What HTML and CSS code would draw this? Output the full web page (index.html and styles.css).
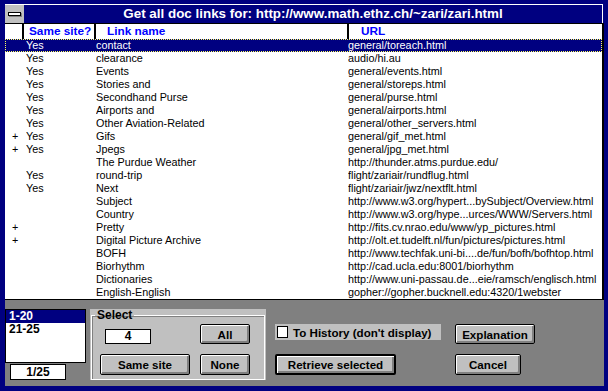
FILE: index.html
```html
<!DOCTYPE html>
<html>
<head>
  <title>Get all doc links</title>
  <link rel="stylesheet" href="styles.css">
</head>

<body>
  <div class="window">
    <div class="title-bar">
      <div class="sys-menu"><div class="sys-dash"></div></div>
      <div class="title">Get all doc links for: http://www.math.ethz.ch/~zari/zari.html</div>
    </div>

    <div class="link-list">
      <div class="list-head">
        <div class="head-cell"></div>
        <div class="head-cell head-site">Same site?</div>
        <div class="head-cell head-name">Link name</div>
        <div class="head-cell head-url">URL</div>
      </div>

      <div class="row selected"><span></span><span>Yes</span><span>contact</span><span>general/toreach.html</span></div>
      <div class="row"><span></span><span>Yes</span><span>clearance</span><span>audio/hi.au</span></div>
      <div class="row"><span></span><span>Yes</span><span>Events</span><span>general/events.html</span></div>
      <div class="row"><span></span><span>Yes</span><span>Stories and</span><span>general/storeps.html</span></div>
      <div class="row"><span></span><span>Yes</span><span>Secondhand Purse</span><span>general/purse.html</span></div>
      <div class="row"><span></span><span>Yes</span><span>Airports and</span><span>general/airports.html</span></div>
      <div class="row"><span></span><span>Yes</span><span>Other Aviation-Related</span><span>general/other_servers.html</span></div>
      <div class="row"><span>+</span><span>Yes</span><span>Gifs</span><span>general/gif_met.html</span></div>
      <div class="row"><span>+</span><span>Yes</span><span>Jpegs</span><span>general/jpg_met.html</span></div>
      <div class="row"><span></span><span></span><span>The Purdue Weather</span><span>http://thunder.atms.purdue.edu/</span></div>
      <div class="row"><span></span><span>Yes</span><span>round-trip</span><span>flight/zariair/rundflug.html</span></div>
      <div class="row"><span></span><span>Yes</span><span>Next</span><span>flight/zariair/jwz/nextflt.html</span></div>
      <div class="row"><span></span><span></span><span>Subject</span><span>http://www.w3.org/hypert...bySubject/Overview.html</span></div>
      <div class="row"><span></span><span></span><span>Country</span><span>http://www.w3.org/hype...urces/WWW/Servers.html</span></div>
      <div class="row"><span>+</span><span></span><span>Pretty</span><span>http://fits.cv.nrao.edu/www/yp_pictures.html</span></div>
      <div class="row"><span>+</span><span></span><span>Digital Picture Archive</span><span>http://olt.et.tudelft.nl/fun/pictures/pictures.html</span></div>
      <div class="row"><span></span><span></span><span>BOFH</span><span>http://www.techfak.uni-bi....de/fun/bofh/bofhtop.html</span></div>
      <div class="row"><span></span><span></span><span>Biorhythm</span><span>http://cad.ucla.edu:8001/biorhythm</span></div>
      <div class="row"><span></span><span></span><span>Dictionaries</span><span>http://www.uni-passau.de...eie/ramsch/englisch.html</span></div>
      <div class="row"><span></span><span></span><span>English-English</span><span>gopher://gopher.bucknell.edu:4320/1webster</span></div>
    </div>

    <div class="panel">
      <div class="pages">
        <div class="page-list">
          <div class="page-item current">1-20</div>
          <div class="page-item">21-25</div>
        </div>
        <div class="page-count">1/25</div>
      </div>

      <div class="group">
        <fieldset class="select-box">
          <legend>Select</legend>
          <div class="select-grid">
            <div class="count-field">4</div>
            <button class="btn btn-all">All</button>
            <button class="btn btn-same">Same site</button>
            <button class="btn btn-none">None</button>
          </div>
        </fieldset>
      </div>

      <div class="actions">
        <label class="history">
          <span class="check"></span>
          To History (don't display)
        </label>
        <button class="btn btn-default btn-retrieve">Retrieve selected</button>
      </div>

      <div class="actions actions-right">
        <button class="btn btn-explain">Explanation</button>
        <button class="btn btn-cancel">Cancel</button>
      </div>
    </div>
  </div>
</body>
</html>
```

FILE: styles.css
```css
html, body {
  margin: 0;
  padding: 0;
}

body {
  background-color: #000080;
  font-family: "Liberation Sans", Arial, sans-serif;
}

.window {
  width: 608px;
  height: 391px;
  box-sizing: border-box;
  padding: 4px 4px 5px 5px;
  background-color: #000080;
}

/* title bar */
.title-bar {
  display: flex;
  height: 19px;
  box-sizing: border-box;
  border-top: 1px solid #fff;
  border-right: 1px solid #fff;
  margin-right: 1px;
}

.sys-menu {
  width: 19px;
  height: 18px;
  background-color: #c0c0c0;
  display: flex;
  align-items: center;
  justify-content: center;
}

.sys-dash {
  width: 11px;
  height: 2px;
  border: 1px solid #000;
  background-color: #fff;
  box-shadow: 1px 1px 0 #808080;
}

.title {
  flex: 1;
  color: #fff;
  font-weight: bold;
  font-size: 13.4px;
  line-height: 18px;
  text-align: center;
  white-space: nowrap;
}

/* link list */
.link-list {
  background-color: #fff;
  border-top: 1px solid #000;
  border-right: 2px solid #000;
  border-bottom: 1px solid #000;
  height: 275px;
  overflow: hidden;
}

.list-head {
  display: grid;
  grid-template-columns: 19px 72px 253px 1fr;
  height: 15px;
}

.head-cell {
  border-right: 2px solid #000;
  color: #0000ff;
  font-weight: bold;
  font-size: 11.8px;
  line-height: 15px;
  white-space: nowrap;
}

.head-cell:last-child {
  border-right: none;
}

.head-site {
  padding-left: 5px;
}

.head-name {
  padding-left: 11px;
}

.head-url {
  padding-left: 12px;
}

.row {
  display: grid;
  grid-template-columns: 21px 70px 252px 1fr;
  height: 13px;
  font-size: 10.8px;
  line-height: 13px;
  color: #000;
  white-space: nowrap;
  box-sizing: border-box;
}

.row span {
  overflow: hidden;
}

.row span:first-child {
  padding-left: 7px;
}

.row.selected {
  background-color: #000080;
  color: #fff;
  outline: 1px dotted #ffff60;
  outline-offset: -1px;
}

/* bottom panel */
.panel {
  display: flex;
  align-items: flex-start;
  height: 86px;
  box-sizing: border-box;
  padding-top: 9px;
  background-color: #808080;
}

.pages {
  width: 81px;
}

.page-list {
  height: 54px;
  box-sizing: border-box;
  border: 1px solid #000;
  background-color: #fff;
}

.page-item {
  height: 13px;
  padding-left: 3px;
  font-weight: bold;
  font-size: 12px;
  line-height: 13px;
}

.page-item.current {
  background-color: #000080;
  color: #fff;
}

.page-count {
  width: 56px;
  height: 16px;
  box-sizing: border-box;
  margin: 1px 0 0 5px;
  border: 1px solid #000;
  background-color: #fff;
  font-weight: bold;
  font-size: 12px;
  line-height: 14px;
  text-align: center;
}

.group {
  margin-left: 4px;
  width: 176px;
  box-sizing: border-box;
  padding: 0 1px;
  background-color: #c0c0c0;
}

.select-box {
  margin: 0;
  padding: 0;
  border: 1px solid #fff;
  box-shadow: inset 1px 1px 0 #808080;
}

.select-box legend {
  margin-left: 3px;
  padding: 0 2px;
  font-weight: bold;
  font-size: 12px;
  line-height: 12px;
}

.select-grid {
  display: grid;
  grid-template-columns: 90px 50px;
  grid-template-rows: 20px 21px;
  column-gap: 10px;
  row-gap: 10px;
  padding: 3px 0 4px 8px;
}

.count-field {
  align-self: start;
  width: 46px;
  height: 15px;
  box-sizing: border-box;
  margin: 5px 0 0 5px;
  border: 1px solid #000;
  background-color: #fff;
  font-weight: bold;
  font-size: 12px;
  line-height: 13px;
  text-align: center;
}

.btn {
  display: block;
  padding: 0;
  margin: 0;
  box-sizing: border-box;
  border: 1px solid #000;
  border-radius: 2px;
  background-color: #c0c0c0;
  box-shadow: inset 1px 1px 0 #fff, inset -2px -2px 0 #808080;
  font-family: "Liberation Sans", Arial, sans-serif;
  font-weight: bold;
  font-size: 11.6px;
  color: #000;
  cursor: pointer;
}

.btn-default {
  border-width: 2px;
}

.btn-all,
.btn-none {
  width: 50px;
}

.btn-same {
  width: 90px;
}

.actions {
  display: flex;
  flex-direction: column;
  align-items: flex-start;
  margin-left: 9px;
  width: 166px;
  padding-top: 15px;
}

.history {
  display: flex;
  align-items: center;
  width: 166px;
  height: 16px;
  background-color: #c0c0c0;
  font-weight: bold;
  font-size: 11.6px;
}

.check {
  width: 11px;
  height: 12px;
  box-sizing: border-box;
  margin: 0 5px 0 2px;
  border: 1px solid #000;
  background-color: #fff;
}

.btn-retrieve {
  margin-top: 14px;
  width: 121px;
  height: 21px;
}

.actions-right {
  margin-left: 14px;
  width: 80px;
}

.btn-explain {
  width: 80px;
  height: 20px;
}

.btn-cancel {
  margin-top: 10px;
  width: 66px;
  height: 21px;
}
```
